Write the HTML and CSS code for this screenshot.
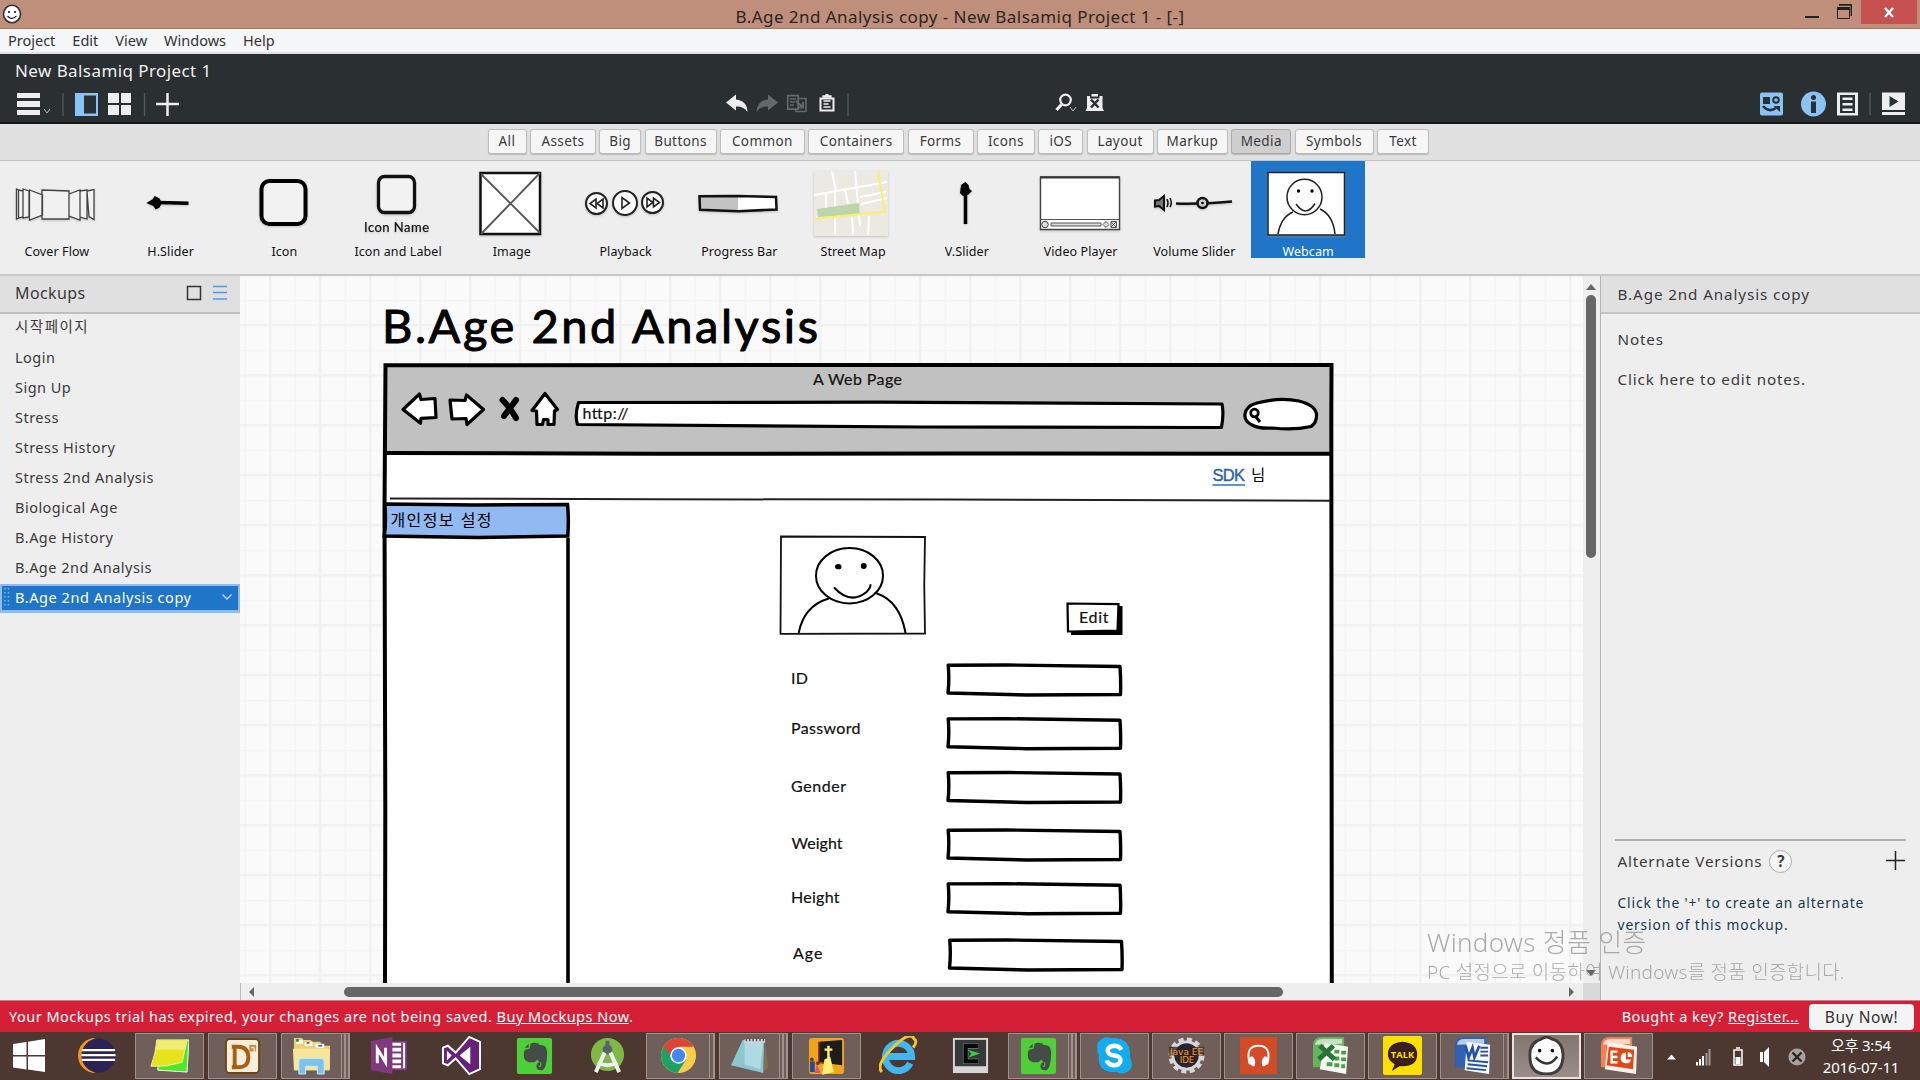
FILE: index.html
```html
<!DOCTYPE html>
<html lang="ko">
<head>
<meta charset="utf-8">
<title>B.Age 2nd Analysis copy - New Balsamiq Project 1</title>
<link rel="stylesheet" href="styles.css">
</head>
<body>
<div class="app">
  <header class="titlebar">
    <svg class="appicon" width="20" height="22"><ellipse cx="10" cy="11" rx="8.5" ry="8.7" fill="#fff" stroke="#333" stroke-width="1.6"/><circle cx="7" cy="9" r="1"/><circle cx="13" cy="9" r="1"/><path d="M5.500 13q4.500 5 9-.2" fill="none" stroke="#222" stroke-width="1.2"/></svg>
    <h1>B.Age 2nd Analysis copy - New Balsamiq Project 1 - [-]</h1>
    <div class="winctl">
      <svg width="50" height="24"><path d="M1 16h14v2H1z" fill="#222"/><path d="M33.500 10V18.500H45.500V8H33.500z" fill="none" stroke="#222"/><path d="M33 7h13v3H33zM35 4h13v1.800H35zM46.500 4H48v12h-1.300z" fill="#222"/></svg>
      <span class="close"><svg width="12" height="11"><path d="M2 1l8 9M10 1L2 10" stroke="#fff" stroke-width="2.300"/></svg></span>
    </div>
  </header>
  <nav class="menubar"><span>Project</span><span>Edit</span><span>View</span><span>Windows</span><span>Help</span></nav>
  <section class="head">
    <div class="project">New Balsamiq Project 1</div>
    <div class="tools">
      <div class="left">
        <svg viewBox="17 90 114 28" width="114" height="28"><path d="M17 93h23v5H17zM17 101h23v6H17zM17 110h23v5H17z" fill="#eee"/><path d="M44 109l3 4 3-4" fill="none" stroke="#bbb"/><path d="M63 93v23" stroke="#565a5c" stroke-width="1.300"/><path d="M75 93h23v23H75zM84 95.500v18h12v-18z" fill="#89c4f4" fill-rule="evenodd"/><path d="M108 93h11v10h-11zM121 93h10v10h-10zM108 105h11v10h-11zM121 105h10v10h-10z" fill="#eee"/></svg>
        <svg viewBox="143 90 38 28" width="38" height="28"><path d="M144.500 93v23" stroke="#565a5c" stroke-width="1.300"/><path d="M156 104h23M167.500 93v23" stroke="#eee" stroke-width="2.500"/></svg>
      </div>
      <div class="mid">
        <svg viewBox="726 90 124 28" width="124" height="28"><path d="M726 102.500l10-8v5q11 1 11.500 12.500-4-6-11.500-5.500v4z" fill="#eee"/><path d="M778 102.500l-10-8v5q-11 1-11.500 12.500 4-6 11.500-5.500v4z" fill="#64696b"/><path d="M787.700 95.700h10.500v13.500h-10.500zM799 98.500h7v13h-10v-2" fill="none" stroke="#64696b" stroke-width="1.700"/><path d="M790 99h6M790 102h5M790 105h4" stroke="#64696b" stroke-width="1.500"/><path d="M796 101l6.500 6m.5-5v5.500h-5.500" fill="none" stroke="#64696b" stroke-width="2"/><path d="M820.500 98.500h13v12h-13z" fill="#2a2f31" stroke="#eee" stroke-width="2"/><path d="M823 97h8v-1h-2q-2-3-4 0h-2zM823.500 101h7M823.500 104h5M823.500 107h7" fill="#eee" stroke="#eee" stroke-width="1.300"/><path d="M848 93v23" stroke="#565a5c" stroke-width="1.300"/></svg>
        <svg viewBox="1055 90 50 28" width="50" height="28"><circle cx="1065.500" cy="100" r="5.300" fill="none" stroke="#eee" stroke-width="2.200"/><path d="M1061.500 104.500l-5 5.500" stroke="#eee" stroke-width="3.200"/><path d="M1070 107l3 4 3-4" fill="none" stroke="#bbb"/><path d="M1087 96h3v2.500h9.500V96h3v12l1.500 3h-18.500l1.500-3zM1091.500 94h6.500v2.500h-6.500z" fill="#eee"/><path d="M1091 99.500l7.500 8M1098.500 99.500l-7.500 8" stroke="#2a2f31" stroke-width="2.500"/></svg>
      </div>
      <div class="right">
        <svg viewBox="1760 90 98 28" width="98" height="28"><rect x="1760" y="92.500" width="23" height="23" rx="2" fill="#89c4f4"/><path d="M1763 97h7v7h-7z" fill="#263238"/><circle cx="1776" cy="100" r="2.800" fill="none" stroke="#263238" stroke-width="2"/><path d="M1763 106q6 7 13 2" fill="none" stroke="#263238" stroke-width="2.500"/><path d="M1773.500 106h6.500v6z" fill="#263238"/><circle cx="1813.500" cy="104" r="12.500" fill="#89c4f4"/><path d="M1811 101.500h5V113h-5z" fill="#263238"/><circle cx="1813.500" cy="97.500" r="2.500" fill="#263238"/><path d="M1837 92.500h21v23h-21z" fill="#eee"/><path d="M1840 95h15v18h-15z" fill="#263238"/><path d="M1842.500 97.500h10v2.500h-10zM1842.500 103h10v2.500h-10zM1842.500 108.500h10v2.500h-10z" fill="#eee"/></svg>
        <svg viewBox="1869 90 38 28" width="38" height="28"><path d="M1870 93v22" stroke="#565a5c" stroke-width="1.300"/><path d="M1882 92.500h23V110h-23zM1882 112h23v3h-23z" fill="#eee"/><path d="M1889.500 96l9 5.500-9 5.500z" fill="#263238"/></svg>
      </div>
    </div>
  </section>
  <nav class="cats"><span>All</span><span>Assets</span><span>Big</span><span>Buttons</span><span>Common</span><span>Containers</span><span>Forms</span><span>Icons</span><span>iOS</span><span>Layout</span><span>Markup</span><span class="on">Media</span><span>Symbols</span><span>Text</span></nav>
  <section class="library">
    <figure><svg class="art" viewBox="0 0 114 82"><g fill="#f1f1f1" stroke="#444" stroke-width="1.300"><path d="M16.500 28l2 1v28l-2 1zM18.500 29l4.500 1v26l-4.500 1zM23 28l6 2v26l-6 1zM29.500 29l13 5v20l-13 5zM42 29l27 1v28H42zM69 33l11-4v30l-11-4zM80 30l7-1v29l-7-2zM87 30l7-1.500v30l-5-3z"/></g></svg><figcaption>Cover Flow</figcaption></figure>
    <figure><svg class="art" viewBox="0 0 114 82"><path d="M45 41.500l30.500.7" stroke="#000" stroke-width="3.500"/><path d="M35 42l5-3 2-3 4 2 2 4-2 4-3 1.500-2-3z" stroke="#000" stroke-width="1.500"/></svg><figcaption>H.Slider</figcaption></figure>
    <figure><svg class="art" viewBox="0 0 114 82"><rect x="34.500" y="20" width="44" height="43" rx="8" fill="#f2f2f2" stroke="#000" stroke-width="4"/></svg><figcaption>Icon</figcaption></figure>
    <figure><svg class="art" viewBox="0 0 114 82"><rect x="37.500" y="15.500" width="36" height="36" rx="6" fill="#f2f2f2" stroke="#111" stroke-width="3.300"/><text x="23" y="71" textLength="65" class="sk" font-size="13">Icon Name</text></svg><figcaption>Icon and Label</figcaption></figure>
    <figure><svg class="art" viewBox="0 0 114 82"><path d="M25.500 12H85v61H25.500z" fill="#fff" stroke="#111" stroke-width="2.500"/><path d="M26 13l59 59M85 12L26 73" stroke="#555" stroke-width="1.800"/></svg><figcaption>Image</figcaption></figure>
    <figure><svg class="art" viewBox="0 0 114 82"><g fill="#fafafa" stroke="#222" stroke-width="2"><circle cx="28.500" cy="42.500" r="10.500"/><circle cx="57" cy="42" r="12"/><circle cx="84.500" cy="41.500" r="10.500"/><g stroke-width="1.600"><path d="M28 38v9l-6-4.500zM35 38v9l-6-4.500zM54 36.500v11l7.500-5.500zM79 37v9l6-4.500zM85.500 37v9l6-4.500z"/></g></g></svg><figcaption>Playback</figcaption></figure>
    <figure><svg class="art" viewBox="0 0 114 82"><path d="M17.500 35l77 .5v14L56 50l-38-1z" fill="#fff"/><path d="M18 36h38v13.500L18 49z" fill="#c4c4c4"/><path d="M17.500 35.300l38-.3 38.500 1 .5 12.500L56 50.200 18 48.700z" fill="none" stroke="#111" stroke-width="2.500"/></svg><figcaption>Progress Bar</figcaption></figure>
    <figure><svg class="art" viewBox="0 0 114 82"><path d="M18 10h74v65H18z" fill="#ebe9e2"/><g fill="none" stroke="#fff" stroke-width="2"><path d="M18 34l73-13M36 10l4 20M59 10l5 55M30 32v16M39 30v17M49 28l3 15M64 36l26-5M65 43l26-6M39 57v17M56 56l1 18M73 55l-1 19"/></g><path d="M21 48l42-6 1 11-42 3z" fill="#bcd5a9"/><path d="M18 58l71-7.500L82 10" fill="none" stroke="#fbf06a" stroke-width="2"/></svg><figcaption>Street Map</figcaption></figure>
    <figure><svg class="art" viewBox="0 0 114 82"><path d="M55.500 30v33" stroke="#000" stroke-width="3.500"/><path d="M55.500 21l3 3 1 4 2.500 2-4 4-5 1-3-3 1-8z"/></svg><figcaption>V.Slider</figcaption></figure>
    <figure><svg class="art" viewBox="0 0 114 82"><path d="M17.500 16h79v52.500h-79z" fill="#fff" stroke="#444" stroke-width="1.400"/><path d="M17 16.500h79" stroke="#333" stroke-width="2"/><path d="M17 58.500h79M28 62h50v3H28zM80 63.500l3-3 3 3-3 3zM88 61l5 5M93 61l-5 5M88 60.500h5.500v6H88z" fill="#ddd" stroke="#555"/><circle cx="22" cy="63.500" r="3.300" fill="#ddd" stroke="#444"/></svg><figcaption>Video Player</figcaption></figure>
    <figure><svg class="art" viewBox="0 0 114 82"><path d="M18 39.500l4-.5 5-4v14l-5-4-4 .5z" fill="#777" stroke="#111" stroke-width="2"/><path d="M30 38q2 4 0 8M33 37q2.500 5 0 9" fill="none" stroke="#111" stroke-width="1.500"/><path d="M39 42.500q22 1 56-2" fill="none" stroke="#111" stroke-width="2.300"/><circle cx="65.500" cy="42" r="5" fill="#ccc" stroke="#111" stroke-width="2.500"/><circle cx="65.500" cy="42" r="1.300"/></svg><figcaption>Volume Slider</figcaption></figure>
    <figure class="sel"><svg class="art" viewBox="0 0 114 82"><path d="M17 11.500h76.500v62.500H17z" fill="#fff" stroke="#222" stroke-width="1.500"/><g fill="none" stroke="#222" stroke-width="1.500"><ellipse cx="53.500" cy="36" rx="17.500" ry="17.700"/><path d="M45 43q10 14 19-.5M27 73q3-17 15-22M69 48q13 6 15 25"/></g><circle cx="47.500" cy="30" r="1.700"/><circle cx="61" cy="30" r="1.700"/></svg><figcaption>Webcam</figcaption></figure>
  </section>
  <main class="work">
    <aside class="nav">
      <div class="navhead"><b>Mockups</b><svg width="42" height="18"><path d="M1.500 2.500h13v13h-13z" fill="none" stroke="#333" stroke-width="1.500"/><path d="M27 2.500h14M27 8.500h14M27 15h14" stroke="#459fe3" stroke-width="1.500"/></svg></div>
      <ul><li class="kr">시작페이지</li><li>Login</li><li>Sign Up</li><li>Stress</li><li>Stress History</li><li>Stress 2nd Analysis</li><li>Biological Age</li><li>B.Age History</li><li>B.Age 2nd Analysis</li><li class="cur"><svg class="grip" width="6" height="20"><path d="M1 1v19M4.500 1v19" stroke="#7fb3e4" stroke-width="1.500" stroke-dasharray="1.500 2.500"/></svg><span>B.Age 2nd Analysis copy</span><svg width="12" height="8"><path d="M1.500 1.500L6 6l4.500-4.500" fill="none" stroke="#b8d8f5" stroke-width="1.400"/></svg></li></ul>
    </aside>
    <section class="stage">
      <svg class="canvas" viewBox="240 276 1343 707" width="1343" height="707">
        <defs>
          <pattern id="grid" x="19" y="24" width="50" height="50" patternUnits="userSpaceOnUse"><path d="M26.500 0v50M0 26.500h50" stroke="#f5f5f5" stroke-width="1.500"/><path d="M1.250 0v50M0 1.250h50" stroke="#f1f1f1" stroke-width="2.500"/></pattern>
          <g id="field"><path d="M1.200 1.200L60 1l113 1.500q1 14 .5 28L80 31 1 29q1.500-14 .2-27.800z" fill="#fff" stroke="#000" stroke-width="3.400" stroke-linejoin="round"/></g>
        </defs>
        <path d="M240 276h1343v707H240z" fill="#fafafa"/><path d="M240 276h1343v707H240z" fill="url(#grid)"/>
        <text class="sk big" x="382" y="343" textLength="436">B.Age 2nd Analysis</text>
        <path d="M385 365.500H1331V990H385z" fill="#fff"/>
        <path d="M385 365h946v88H385z" fill="#c1c1c1"/>
        <g fill="none" stroke="#000" stroke-width="4"><path d="M385 990l.3-180-.8-300 1-144.800 946-.2-.2 50 .5 575"/><path d="M385 453l270 .8 300-.3 376 .2"/></g>
        <g fill="#fff" stroke="#000" stroke-width="3.200" stroke-linejoin="round">
          <path d="M403 409.500l16.500-15.500 1.500 5.500 14-1 1 19-15 .8-.5 5z"/>
          <path d="M450 400l15 .5 1.500-5.500L483.500 409.500 467 424.500l-1-6-14 .5z"/>
          <path d="M545 393.500l12.500 16-3 1.500-.5 13.500h-6v-5h-4.500l-1 5H537l-.5-13.500-4.500-.5z"/>
          <path d="M578.500 402.500l300-.3 343.500 1.800q2 10-.5 23.500l-300-.5-344-2.500q-3-9 1-22z"/>
          <path d="M1257 403q22-6 42-2 16 4 17.500 13 .5 9-5.500 12.500-18 4-38 1.500-14 1-21-3-8-4-7-11 1-8 12-11z"/>
        </g>
        <path d="M502.500 400q8 8 13.500 18M516 400q-6 8-12 16" fill="none" stroke="#000" stroke-width="6" stroke-linecap="round"/>
        <circle cx="1254.500" cy="413" r="3.800" fill="none" stroke="#000" stroke-width="2.700"/><path d="M1256 417l4 5" stroke="#000" stroke-width="3"/>
        <text class="sk" x="813" y="385" font-size="16" textLength="89">A Web Page</text>
        <text class="sk" x="582.500" y="418.500" font-size="16" textLength="46">http://</text>
        <path d="M390 498.500l260 .8 300 .2 380 1.300" fill="none" stroke="#222" stroke-width="2"/>
        <text x="1212.500" y="481" class="sdk" textLength="32.500">SDK</text><path d="M1212.500 485h32.500" stroke="#2a72ba" stroke-width="1.500"/>
        <text x="1251" y="481" class="kr" font-size="15.500">님</text>
        <path d="M568 538V990" stroke="#000" stroke-width="3.600"/>
        <path d="M385 504l90 1 92.500-.5q1.500 14 .3 31.500l-90 1.500-93.500-1.500q2-14 .5-32z" fill="#92b9f1" stroke="#000" stroke-width="3.500"/>
        <text x="390.500" y="526" class="kr" font-size="16" textLength="101">개인정보 설정</text>
        <path d="M781 536.500l144 .5q-1.500 48 0 96.500l-144.500.3z" fill="#fff" stroke="#111" stroke-width="1.800"/>
        <g fill="none" stroke="#000" stroke-width="2" stroke-linecap="round"><ellipse cx="849.500" cy="575.700" rx="33.500" ry="27.700"/><path d="M834.500 588q16 17 32 4 4-4 4-7M798.700 633q5-27 30-34.500M877 593.500q23 8 28.500 39.500"/></g>
        <ellipse cx="838.300" cy="566.700" rx="3.200" ry="2.600"/><ellipse cx="863.700" cy="566" rx="3" ry="3"/>
        <path d="M1071 606h51.500v29H1071z"/><path d="M1067.500 603.500l51 .7-1 26.300-49.500 1z" fill="#fff" stroke="#000" stroke-width="2.200"/>
        <g class="sk" font-size="16"><text x="1079" y="622.500" textLength="29.500">Edit</text>
        <text x="791" y="683.500" textLength="17">ID</text><text x="791" y="734" textLength="69.500">Password</text><text x="791" y="791.500" textLength="55">Gender</text><text x="791.500" y="849" textLength="51">Weight</text><text x="791" y="902.500" textLength="48.500">Height</text><text x="793" y="959" textLength="29.500">Age</text></g>
        <use href="#field" x="947" y="664"/><use href="#field" x="947" y="717.700"/><use href="#field" x="947" y="771.500"/><use href="#field" x="947" y="829"/><use href="#field" x="947" y="882.700"/><use href="#field" x="948.500" y="939"/>
      </svg>
      <div class="vbar"><i></i><span></span><i class="down"></i></div>
      <div class="hbar"><i></i><span></span><i class="rt"></i></div>
      <div class="corner"></div>
    </section>
    <aside class="props">
      <div class="phead">B.Age 2nd Analysis copy</div>
      <div class="notes"><p>Notes</p><p class="ed">Click here to edit notes.</p></div>
      <div class="alt"><div class="altrow"><span>Alternate Versions</span><span class="q">?</span><svg width="20" height="20"><path d="M0 9.500h19M9.500 0v19" stroke="#222" stroke-width="1.500"/></svg></div><p>Click the '+' to create an alternate<br>version of this mockup.</p></div>
    </aside>
    <div class="watermark"><div>Windows 정품 인증</div><p>PC 설정으로 이동하여 Windows를 정품 인증합니다.</p></div>
  </main>
  <div class="trial"><span class="t1">Your Mockups trial has expired, your changes are not being saved. <u>Buy Mockups Now</u>.</span><span class="t2">Bought a key? <u>Register...</u></span><span class="buy">Buy Now!</span></div>
  <footer class="taskbar">
    <div class="start"><svg width="32" height="34"><path d="M0 5l13.500-2v13H0zM15 2.800L32 0v16H15zM0 17.500h13.500v13L0 28.500zM15 17.500h17V33l-17-2.500z" fill="#fff"/></svg></div>
    <div class="apps">
      <div class="app-i"><svg viewBox="0 0 40 40"><path d="M19 2A18 18 0 0 0 19 38A20 20 0 0 1 19 2" fill="#f7941e"/><circle cx="22" cy="20" r="17.500" fill="#2c2255"/><path d="M5 14.500h34M4.500 19.500h35M5 24.500h34" stroke="#fff" stroke-width="2.300"/></svg></div>
      <div class="app-i run"><svg viewBox="0 0 40 40"><path d="M9 7l31-3-2 33-30-2z" fill="#4bea25" stroke="#fff"/><path d="M7 4h31l-5 23q-15 5-32 4 5-13 6-27z" fill="#e6e21c" stroke="#f6f6b0"/><path d="M8 5h29l-2 9H6z" fill="#f1ed74"/></svg></div>
      <div class="app-i run"><svg viewBox="0 0 40 40"><rect x="3" y="3" width="34" height="35" rx="4" fill="#f6eedb" stroke="#704214" stroke-width="2"/><path d="M9 11h6q11 0 11 11T14 32H9M12 12v20" fill="none" stroke="#a55f12" stroke-width="4"/><rect x="27" y="9" width="7" height="7" fill="#c7904d"/><path d="M29 12h3v5" stroke="#fff" fill="none"/></svg></div>
      <div class="app-i run s2"><svg viewBox="0 0 40 40"><path d="M2 2h8l2 2h7l2 2h8l2 4h8v25H2z" fill="#ecd174"/><path d="M4 4h7v4H4zM13 6h8v4h-8zM24 8h9v4h-9z" fill="#fff"/><path d="M4 3h3v3H4z" fill="#2b9c57"/><path d="M15 6h3v2h-3z" fill="#d5372b"/><path d="M27 9h4v2h-4z" fill="#2c7cc5"/><path d="M1 13h38l-1 22H2z" fill="#f6e69b"/><path d="M7 39V26q0-3 3-3h20q3 0 3 3v13h-7v-8H14v8z" fill="#7cc3ea" stroke="#c6e8fa"/></svg></div>
      <div class="app-i"><svg viewBox="0 0 40 40"><path d="M22 6h16v28H22z" fill="#fff" stroke="#80397b" stroke-width="2"/><path d="M23 11h10M23 17h10M23 23h10M23 29h10M34 7v26" stroke="#80397b" stroke-width="2"/><path d="M2 5l22-4v38L2 35z" fill="#80397b"/><path d="M8.500 28V13L17 27V12" fill="none" stroke="#fff" stroke-width="3"/></svg></div>
      <div class="app-i"><svg viewBox="0 0 40 40"><path d="M1 12l5-2 8 7L28 1l11 5v28l-11 5-14-16-8 7-5-2z" fill="#68217a" stroke="#fff" stroke-width="2"/><path d="M5 15v10l5-5zM18 20l11-9v18z" fill="#fff"/></svg></div>
      <div class="app-i"><svg viewBox="0 0 40 40"><g id="ever"><rect x="2" y="2" width="36" height="37" rx="2" fill="#4fd039"/><path d="M10 14l5-1 1-5q1-1 4-1 4 0 5 2l5 1q3 1 3 10-1 14-5 15-6 1-6-4 0-4 4-4v3q-2 0-1 2 2 1 2-5-3 0-4-3-2 3-5 3-6 0-8-3-2-4 0-10zM10 12l4-4v4z" fill="#444c48"/></g></svg></div>
      <div class="app-i"><svg viewBox="0 0 40 40"><circle cx="20" cy="19" r="17" fill="#7fb847"/><circle cx="20" cy="14" r="5" fill="#56636b"/><path d="M20 5v6" stroke="#56636b" stroke-width="4"/><path d="M17 17L8 37M23 17l9 20M10 27q10 6 20 0" fill="none" stroke="#eee" stroke-width="4"/></svg></div>
      <div class="app-i run s1"><svg viewBox="0 0 40 40"><circle cx="20" cy="20" r="18" fill="#f9cd48"/><path d="M20 20L4.400 11A18 18 0 0 0 19 38L28 24z" fill="#1ea263"/><path d="M4.400 11A18 18 0 0 1 35.600 11H20L12 20z" fill="#dc4437"/><circle cx="20" cy="20" r="8.500" fill="#fff"/><circle cx="20" cy="20" r="6.800" fill="#4587f0"/></svg></div>
      <div class="app-i run s2"><svg viewBox="0 0 40 40"><path d="M36 5l3 27-5 6z" fill="#84714a"/><path d="M13 4h22l-1 34L1 30z" fill="#8cc6d0"/><path d="M15 6h19l-3 28-16-5z" fill="#c7e7ec" opacity=".6"/><path d="M15 3h21v4H14z" fill="#cfd6d8"/><path d="M16 4h19" stroke="#555" stroke-width="3" stroke-dasharray="1.500 2"/></svg></div>
      <div class="app-i run"><svg viewBox="0 0 40 40"><rect x="2" y="2" width="36" height="37" rx="3" fill="#efa51c"/><path d="M12 6l24-2v26l-24-3z" fill="#1d1b1c"/><path d="M12 6v21l12 2" fill="none" stroke="#a53b20" stroke-width="1.500"/><path d="M22 10v14M18 14h8M19 25l-2 13 9-2-3-13z" stroke="#fff07a" stroke-width="2.500" fill="#fff07a"/><circle cx="5" cy="24" r="2" fill="#7c3a16"/><path d="M3 26h5v11H3z" fill="#234b9f"/><circle cx="11" cy="28" r="2" fill="#7c3a16"/><path d="M10 29l4 9H8z" fill="#e04d8b"/></svg></div>
      <div class="app-i"><svg viewBox="0 0 40 40"><path d="M32 28A13.500 14 0 1 1 33.500 21H10" fill="none" stroke="#41b7ee" stroke-width="7"/><path d="M3 37Q-4 30 14 12T36 3q4 2-1 9" fill="none" stroke="#f5c62c" stroke-width="3"/></svg></div>
      <div class="app-i"><svg viewBox="0 0 40 40"><rect x="2" y="2" width="36" height="36" fill="#d6d6d6"/><rect x="4" y="4" width="32" height="27" fill="#353938"/><path d="M28 10H15v16h13" fill="none" stroke="#999" stroke-width="5.500"/><path d="M28 10H15v16h13" fill="none" stroke="#090909" stroke-width="4.500"/><path d="M17 14l13 4-12 4 3-4z" fill="#2fd141"/></svg></div>
      <div class="app-i run s2"><svg viewBox="0 0 40 40"><use href="#ever"/></svg></div>
      <div class="app-i run"><svg viewBox="0 0 40 40"><path d="M3 7Q8-1 17 2q20-1 19 20 5 10-3 15-5 3-11 0Q2 38 4 20 1 13 3 7z" fill="#10aef0"/><path d="M27 14q-2-4-8-4-6 1-6 5 0 4 7 5 7 1 6 6-1 4-7 4-6-1-7-5" fill="none" stroke="#fff" stroke-width="4.500"/></svg></div>
      <div class="app-i run"><svg viewBox="0 0 40 40"><circle cx="20" cy="20" r="16" fill="none" stroke="#d7d7d7" stroke-width="5" stroke-dasharray="5 3.370"/><circle cx="20" cy="20" r="14" fill="#28243a" stroke="#d7d7d7" stroke-width="3"/><path d="M2 11h36v9H2zM12 20h17v9H12z" fill="#2b2320" opacity=".75"/><text x="3" y="19" class="java" textLength="34" lengthAdjust="spacingAndGlyphs">Java EE</text><text x="13" y="28" class="java" textLength="15" lengthAdjust="spacingAndGlyphs">IDE</text></svg></div>
      <div class="app-i run"><svg viewBox="0 0 40 40"><rect x="1" y="1" width="38" height="38" fill="#d24a26"/><path d="M11 29Q6 10 20 10t9 19" fill="none" stroke="#fff" stroke-width="2"/><path d="M12 21h2q4 4 2 10h-2q-5-3-4-8zM28 21h-2q-4 4-2 10h2q5-3 4-8z" fill="#fff"/></svg></div>
      <div class="app-i run"><svg viewBox="0 0 40 40"><path d="M2 32V10q0-9 9-9h23v31z" fill="#65b35a"/><path d="M4 9q1-6 8-6h20v5z" fill="#c3e2be"/><path d="M14 7l24 4-2 28-27-5z" fill="#f5faf4"/><path d="M24 14h5v4h-5zM31 15h5v4h-5zM24 21h5v4h-5zM31 22h5v4h-5zM24 28h5v4h-5zM31 29h4v4h-4zM16 27h6v4h-6z" fill="#4c9f45"/><path d="M9 10l15 14M23 10L8 24" stroke="#277535" stroke-width="5"/></svg></div>
      <div class="app-i run"><svg viewBox="0 0 40 40"><rect width="40" height="40" rx="2" fill="#fce000"/><path d="M5 19q0-12 15-13 15 1 15 13T20 31h-3l-8 5 3-7q-7-4-7-10z" fill="#3b1f1f"/><text x="8" y="23" class="talk" textLength="24">TALK</text></svg></div>
      <div class="app-i run s1"><svg viewBox="0 0 40 40"><path d="M2 32V10q0-9 9-9h23v31z" fill="#2f62b2"/><path d="M4 9q1-6 8-6h20v5z" fill="#b9cde9"/><path d="M14 6l24 3-1 30-25-4z" fill="#f6f9ff"/><path d="M28 12h8M28 16h8M28 20h8M15 25l21 2M15 29l20 2M14 33l20 2" stroke="#2752a4" stroke-width="2"/><path d="M13 10l3 12 4-10 2 10 5-12" fill="none" stroke="#2752a4" stroke-width="2.800"/></svg></div>
      <div class="app-i run act"><svg viewBox="0 0 40 40"><path d="M15 3q5-4 10 0 11 2 12 16 0 20-17 20T3 21Q2 7 15 3z" fill="#fff" stroke="#3d3d3d" stroke-width="3"/><circle cx="13" cy="15" r="1.800"/><circle cx="26" cy="15" r="1.800"/><path d="M9 22q12 13 22-1" fill="none" stroke="#333" stroke-width="2.500"/></svg></div>
      <div class="app-i run"><svg viewBox="0 0 40 40"><path d="M2 32V10q0-9 9-9h23v31z" fill="#f28152"/><path d="M4 9q1-6 8-6h20v5z" fill="#ffd6c4"/><path d="M9 6l30 5-1 28-32-5z" fill="#fff2ec"/><path d="M10 11l26 3-1 20-27-4z" fill="#e14816"/><path d="M19 16h-6v11h6M13 21.500h6" stroke="#fff" stroke-width="2.500" fill="none"/><path d="M27.500 17a5.500 5.500 0 1 0 5.500 7h-5.500z" fill="#fff"/><path d="M29.500 16.500a5 5 0 0 1 4.500 5h-4.500z" fill="#fff"/></svg></div>
    </div>
    <div class="tray"><svg viewBox="1660 1036 160 40" width="160" height="40"><path d="M1667 1059.500l4.500-5 4.500 5z" fill="#fff"/><path d="M1696 1062h2v3.500h-2zM1699 1059h2v6.500h-2zM1702 1056h2v9.500h-2z" fill="#fff"/><path d="M1705.500 1053h2v12.500h-2zM1708.500 1049h2v16.500h-2z" fill="#a59a96"/><path d="M1734 1050h8v15h-8zM1736 1048h4" fill="none" stroke="#fff" stroke-width="1.500"/><path d="M1735.500 1057h5v7h-5zM1760 1052h3v10h-3zM1764 1052l5-5v20l-5-5z" fill="#fff"/><circle cx="1797" cy="1057" r="8.500" fill="#a7a09e"/><path d="M1792.500 1052.500l9 9M1801.500 1052.500l-9 9" stroke="#2a2220" stroke-width="2.300"/></svg></div>
    <div class="clock"><span>오후 3:54</span><span>2016-07-11</span></div>
  </footer>
</div>
</body>
</html>
```

FILE: styles.css
```css
* { box-sizing: border-box; }
body, h1, p, ul, figure { margin: 0; padding: 0; }
body {
  width: 1920px; height: 1080px; overflow: hidden;
  font-family: "Noto Sans", "Noto Sans CJK KR", sans-serif;
  color: #3a3a3a;
}
svg { display: block; flex: none; }
.app { display: grid; grid-template-rows: 29px 25px 70px 37px 115px 724px 32px 48px; height: 1080px; }

.titlebar { background: #bf8f7b; border-bottom: 1px solid #a97865; display: grid; grid-template-columns: 240px 1fr 240px; }
.appicon { margin: 3px 0 0 2px; }
.titlebar h1 { font-size: 17px; font-weight: 400; text-align: center; line-height: 33px; color: #2c2522; letter-spacing: .45px; }
.winctl { display: flex; margin-left: 124px; }
.close { margin-left: 7px; width: 56px; height: 24px; background: #c75050; display: flex; align-items: center; justify-content: center; }

.menubar { background: #f5f6f8; border-bottom: 2px solid #dfe1e4; display: flex; gap: 17px; padding-left: 8px; font-size: 14.500px; line-height: 23px; color: #333; letter-spacing: 0; }

.head { background: #2a2f31; border-bottom: 2px solid #131616; padding: 3px 0 0; color: #f0f0f0; }
.project { font-size: 17px; line-height: 28px; padding-left: 15px; letter-spacing: .42px; }
.tools { display: grid; grid-template-columns: 726px 1034px 160px; margin-top: 5px; }
.left { display: flex; padding-left: 17px; gap: 12px; }
.mid { display: flex; gap: 205px; }
.right { display: flex; gap: 11px; }

.cats { background: #e1e1e1; border-bottom: 1.500px solid #c4c4c4; display: grid; grid-template-columns: 39px 66px 42px 72px 85px 96px 66px 58px 45px 67px 71px 60px 79px 52px; justify-content: start; column-gap: 3.350px; padding: 5px 0 0 487.500px; }
.cats span { height: 25px; border: 1.500px solid #bdbdbd; border-radius: 3px; background: #f6f6f6; text-align: center; font-size: 13.500px; line-height: 23px; letter-spacing: .4px; white-space: nowrap; box-shadow: 0 1px 1px #b8b8b8; }
.cats .on { background: #cfcfcf; border-color: #aaa; }

.library { background: #eee; border-bottom: 2px solid #c8c8c8; display: grid; grid-template-columns: repeat(12, 113.750px); }
.library figure { height: 97px; text-align: center; }
.art { width: 114px; height: 82px; margin-left: -.5px; filter: drop-shadow(0 1px 1px #9998); }
.library figcaption { font-size: 12.500px; line-height: 17px; margin-top: -.5px; color: #111; white-space: nowrap; letter-spacing: .1px; }
.library .sel { background: #1f76c8; }
.library .sel figcaption { color: #fff; }
.sk { font-family: "Lato", sans-serif; fill: #111; stroke: #111; stroke-width: .2px; }
.big { font-size: 47px; fill: #000; stroke: #000; stroke-width: 1px; stroke-linejoin: round; }

.work { display: grid; grid-template-columns: 240px 1360px 320px; position: relative; }
.nav { background: #eee; }
.navhead { height: 38px; background: #e0e0e0; border-bottom: 2px solid #bfbfbf; display: flex; justify-content: space-between; align-items: center; padding: 0 12px 2px 15px; }
.navhead b { font-weight: 400; font-size: 16px; letter-spacing: .4px; }
.nav ul { list-style: none; }
.nav li { height: 30px; line-height: 27px; padding-left: 15px; font-size: 14.500px; letter-spacing: .48px; white-space: nowrap; }
.nav .kr { line-height: 25px; letter-spacing: 1.500px; font-size: 14.500px; }
.nav .cur { background: #1f76c8; color: #fff; border: 3px solid #8dbcf2; border-width: 2px 2px 3px; line-height: 22px; padding: 0 5px 2px 2px; height: 29px; display: flex; align-items: center; letter-spacing: .55px; }
.nav .cur span { margin: 0 auto 0 5px; }

.stage { display: grid; grid-template: 707px 17px / 1343px 17px; background: #eee; }
.vbar { display: flex; flex-direction: column; align-items: center; gap: 5px; padding: 8px 2px 0 0; }
.vbar span { width: 10px; height: 263px; border-radius: 5px; background: #666; }
.vbar i { border: 5px solid transparent; border-top: 0; border-bottom: 6px solid #666; }
.vbar .down { margin-top: auto; margin-bottom: 7px; transform: rotate(180deg); }
.hbar { display: flex; align-items: center; padding: 0 9px 0 8px; border-left: 1px solid #bbb; }
.hbar span { width: 939px; height: 10px; border-radius: 5px; background: #666; margin-left: 90px; }
.hbar i { border: 5px solid transparent; border-left: 0; border-right: 5px solid #666; }
.hbar .rt { margin-left: auto; transform: rotate(180deg); }
.corner { background: #dadada; }
.canvas text.kr { font-family: "Noto Sans CJK KR", sans-serif; fill: #000; }
.sdk { font: 16.500px "Liberation Sans", sans-serif; fill: #2d63a4; stroke: #2d63a4; stroke-width: .4px; }

.props { background: #eee; border-left: 1.500px solid #b5b5b5; display: flex; flex-direction: column; font-size: 15.200px; letter-spacing: .9px; }
.phead { height: 38px; line-height: 37px; background: #e0e0e0; border-bottom: 2px solid #c4c4c4; padding-left: 16.500px; }
.notes { padding: 12px 16.500px 0; line-height: 26px; }
.notes p { letter-spacing: .85px; }
.notes .ed { margin-top: 14px; }
.alt { margin: auto 14px 63.500px 14px; border-top: 2px solid #aeaeae; padding: 8px 0 0 2.500px; }
.altrow { display: flex; align-items: center; height: 25px; letter-spacing: .8px; }
.altrow svg { margin-left: auto; }
.q { width: 23px; height: 23px; border: 1.500px solid #aaa; border-radius: 50%; background: #f6f6f6; text-align: center; line-height: 20px; font-weight: 700; margin-left: 7px; letter-spacing: 0; }
.alt p { margin-top: 18px; font-size: 13.800px; line-height: 22.500px; color: #16394f; letter-spacing: .87px; white-space: nowrap; }
.watermark { position: absolute; left: 1427px; top: 649px; color: #8e8e8e; opacity: .72; font-family: "Noto Sans", "Noto Sans CJK KR", sans-serif; font-weight: 300; white-space: nowrap; }
.watermark div { font-size: 26px; line-height: 34px; letter-spacing: .3px; }
.watermark p { font-size: 19px; line-height: 26px; letter-spacing: .25px; }

.trial { background: #d41f37; border-top: 1.500px solid #b68790; color: #fff; display: flex; align-items: center; padding: 0 6px 1px 9px; font-size: 14.500px; white-space: nowrap; }
.t1 { letter-spacing: .49px; }
.t2 { margin-left: auto; margin-right: 10px; letter-spacing: .5px; }
.buy { width: 105px; height: 26px; background: #f4f4f4; color: #333; border-radius: 4px; text-align: center; font-size: 15.500px; line-height: 26px; letter-spacing: .6px; margin-top: 1px; }

.taskbar { background: #4c3731; display: grid; grid-template-columns: 62px 1598px 160px 82px; }
.start { padding: 7px 0 0 13px; }
.apps { display: grid; grid-template-columns: repeat(10, 73px) repeat(12, 72px); }
.app-i { width: 69px; height: 46px; margin-top: 1px; display: flex; align-items: center; justify-content: center; }
.app-i svg { width: 39px; height: 39px; margin-top: -1px; }
.run { background: #6f5e59; border: 1.500px solid #a0918c; }
.act { background: linear-gradient(#85756f, #9b8c87); border: 2px solid #e8e3e1; }
.s1 { width: 64px; box-shadow: 4px 0 0 -1px #6f5e59, 5px 0 0 0 #a0918c; }
.s2 { width: 61px; box-shadow: 3px 0 0 -1px #6f5e59, 4px 0 0 0 #a0918c, 7px 0 0 -1px #6f5e59, 8px 0 0 0 #a0918c; }
.java { font: 9.500px "DejaVu Sans", sans-serif; fill: #ff9a2a; }
.talk { font: 700 9.500px "Open Sans", sans-serif; fill: #fce000; }
.tray { padding-top: 4px; }
.clock { color: #fff; font-size: 15px; line-height: 22px; display: flex; flex-direction: column; align-items: center; padding-top: 2px; letter-spacing: -.2px; white-space: nowrap; }
```
